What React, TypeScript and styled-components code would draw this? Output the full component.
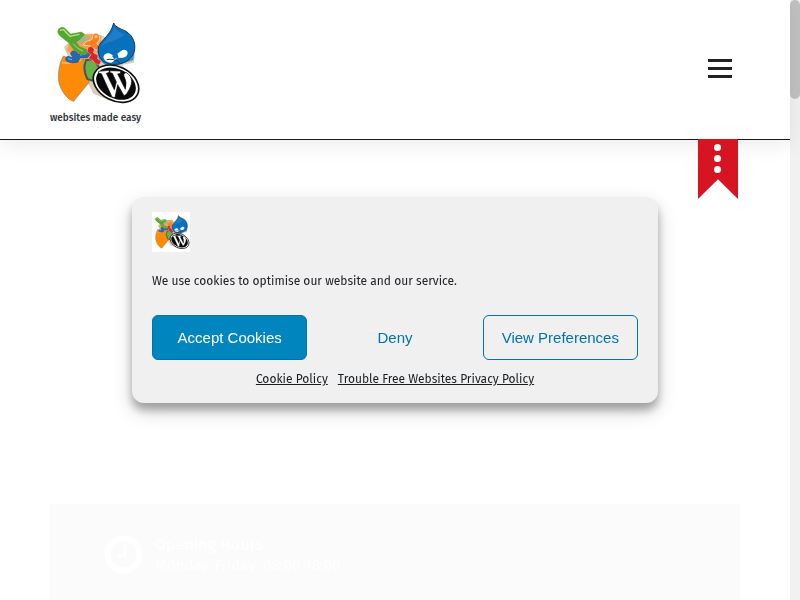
import React from "react";
import styled, { createGlobalStyle } from "styled-components";

const GlobalStyle = createGlobalStyle`
  *, *::before, *::after { box-sizing: border-box; }
  body {
    margin: 0;
    background: #fff;
    color: #222229;
    font-family: "Fira Sans", "Noto Sans", sans-serif;
    font-size: 12px;
  }
`;

const Viewport = styled.div`
  display: flex;
  height: 100vh;
  overflow: hidden;
`;

const Page = styled.div`
  flex: 1;
  min-width: 0;
`;

const ScrollTrack = styled.div`
  width: 10px;
  background: #f1f1f1;
`;

const ScrollThumb = styled.div`
  height: 99px;
  border-radius: 5px;
  background: #c1c1c1;
`;

const Header = styled.header`
  position: relative;
  display: flex;
  justify-content: space-between;
  align-items: center;
  height: 140px;
  padding: 2px 58px 0 50px;
  border-bottom: 1px solid #1a1a1a;
  box-shadow: 0 5px 20px rgba(0, 0, 0, 0.08);
`;

const Brand = styled.a`
  display: flex;
  flex-direction: column;
  align-items: flex-start;
  color: #2f3338;
  font-size: 10px;
  font-weight: 500;
  line-height: 16px;
  text-decoration: none;
`;

const LogoSvg = styled.svg<{ $small?: boolean }>`
  display: block;
  width: ${(p) => (p.$small ? 38 : 91)}px;
  height: ${(p) => (p.$small ? 40 : 95)}px;
  background: #fff;
`;

const MenuButton = styled.button`
  display: flex;
  flex-direction: column;
  gap: 5px;
  width: 24px;
  margin-bottom: 4px;
  padding: 0;
  border: 0;
  background: none;
`;

const MenuBar = styled.span`
  height: 3px;
  background: #222;
`;

const Ribbon = styled.button`
  position: absolute;
  top: 139px;
  right: 52px;
  display: flex;
  flex-direction: column;
  align-items: center;
  gap: 4px;
  width: 40px;
  height: 60px;
  padding: 5px 1px 0 0;
  border: 0;
  background: #d71422;
  clip-path: polygon(0 0, 100% 0, 100% 100%, 50% 67%, 0 100%);
`;

const Dot = styled.span`
  width: 7px;
  height: 7px;
  border-radius: 50%;
  background: #fff;
`;

const Hours = styled.section`
  display: flex;
  align-items: flex-start;
  gap: 12px;
  min-height: 130px;
  margin: 364px 50px 0;
  padding: 31px 54px;
  background: #fbfbfb;
  color: #fff;
`;

const ClockSvg = styled.svg`
  width: 39px;
  height: 39px;
`;

const HoursTitle = styled.h2`
  margin: 0;
  font-size: 16px;
  font-weight: 500;
  line-height: 20px;
`;

const HoursText = styled.p`
  margin: 0;
  font-size: 15px;
  line-height: 20px;
`;

const Overlay = styled.div`
  position: fixed;
  inset: 0 10px 0 0;
  display: flex;
  align-items: center;
  justify-content: center;
`;

const Dialog = styled.div`
  display: grid;
  width: 100%;
  max-width: 526px;
  padding: 15px 20px;
  border-radius: 12px;
  background: #f0f0f0;
  box-shadow: 0 7px 8px rgba(0, 0, 0, 0.28), 0 8px 20px rgba(0, 0, 0, 0.18);
`;

const Message = styled.p`
  margin: 20px 0 25px;
  line-height: 18px;
`;

const Buttons = styled.div`
  display: grid;
  grid-template-columns: repeat(3, 1fr);
  gap: 10px;
`;

const Button = styled.button<{ $kind: "accept" | "deny" | "view" }>`
  height: 45px;
  padding: 0;
  border: 1px solid ${(p) => (p.$kind === "deny" ? "transparent" : "#0073aa")};
  border-radius: 6px;
  background: ${(p) => (p.$kind === "accept" ? "#0085be" : "transparent")};
  color: ${(p) => (p.$kind === "accept" ? "#fff" : "#0073aa")};
  font-family: "Liberation Sans", Arial, sans-serif;
  font-size: 15px;
`;

const Links = styled.nav`
  display: flex;
  justify-content: center;
  gap: 10px;
  margin-top: 10px;

  a {
    color: #191e23;
    line-height: 18px;
  }
`;

function Logo({ small }: { small?: boolean }) {
  return (
    <LogoSvg $small={small} viewBox="30 15 273 285" role="img" aria-label="Trouble Free Websites">
      <path d="M101 82Q145 62 184 76L258 115L286 126L281 158L248 164L270 238L219 276L160 251L131 193L91 156L72 111Z" fill="#c9b89c" opacity=".7" />
      <path d="M88 100Q120 64 181 76L190 142L155 163L112 148L80 121Z" fill="#f3a34e" />
      <path d="M104 84Q130 70 150 82L138 98L114 100Z" fill="#a9b58d" />
      <path d="M170 110L284 112L280 150L206 174L176 148Z" fill="#3c91c6" />
      <path d="M70 138C55 165 51 205 60 228C69 251 86 271 101 274L148 216L134 190Q127 165 133 148L108 152Z" fill="#fd8b07" stroke="#8c8172" strokeWidth="2" />
      <path d="M66 158Q95 162 124 150" fill="none" stroke="#ffc173" strokeWidth="4" />
      <path d="M138 151L160 147L180 176L161 213L142 207Q127 176 138 151Z" fill="#6bb14b" stroke="#4c5645" strokeWidth="6" />
      <path d="M139 94Q151 94 158 86C152 66 178 65 179 82Q180 94 170 99L180 112L170 121L151 108L130 105Z" fill="#ff7d1b" stroke="#fff0dd" strokeWidth="2" />
      <circle cx="168" cy="80" r="5" fill="#ffc47e" />
      <path d="M92 132Q94 120 105 124L117 133L139 124L154 130L142 143L120 143L114 156Q96 162 80 154Q73 143 84 139L100 144Z" fill="#2369b2" stroke="#184f89" strokeWidth="2" />
      <path d="M85 146L95 149M121 135L136 132" stroke="#83b6e8" strokeWidth="3" strokeLinecap="round" />
      <path d="M58 55Q69 47 79 59L92 72L124 66L134 73L118 90L108 96L119 110L145 121L143 132L128 135L103 121L86 98L61 79Q47 65 58 55Z" fill="#54a62e" stroke="#3f8a33" strokeWidth="1" />
      <path d="M61 61Q71 55 77 66L90 79L117 73" fill="none" stroke="#b8e387" strokeWidth="4" strokeLinecap="round" />
      <path d="M99 101L112 114L129 123" fill="none" stroke="#a6db76" strokeWidth="3" />
      <path d="M144 112L155 109L163 118L160 128L174 136L173 147L184 153L178 165L166 161L158 151L145 145L153 134L142 125Z" fill="#df2128" stroke="#fff" strokeWidth="1" />
      <path d="M221 39C227 52 242 56 258 64C280 78 288 101 283 124C273 153 243 168 211 162C184 158 173 140 175 111C183 91 214 73 221 39Z" fill="#0871bd" stroke="#153957" strokeWidth="3" />
      <path d="M222 50C221 74 188 94 181 112C201 91 217 101 254 74C239 65 228 62 222 50Z" fill="#1f7dca" />
      <path d="M190 142Q193 128 208 130L223 138L247 120Q260 117 263 128Q263 140 249 143L232 144L215 158Q196 160 190 142Z" fill="#fff" />
      <path d="M216 137L232 131L236 143L222 147Z" fill="#0871bd" />
      <path d="M200 149Q220 144 240 158" fill="none" stroke="#173752" strokeWidth="3" />
      <ellipse cx="228" cy="221" rx="72" ry="51" transform="rotate(27 228 221)" fill="#fff" stroke="#111" strokeWidth="5" />
      <ellipse cx="228" cy="221" rx="63" ry="44" transform="rotate(27 228 221)" fill="#090909" />
      <path d="M176 184L207 181L208 187L199 190L223 239L229 216L217 190L210 188V182L241 183L242 190L233 192L256 238Q262 216 252 199Q249 189 259 188Q274 196 275 215Q275 228 260 252L252 257L233 224L225 263L216 261L184 191L176 190Z" fill="#fff" stroke="#090909" strokeWidth="2" />
    </LogoSvg>
  );
}

export default function App() {
  return (
    <>
      <GlobalStyle />
      <Viewport>
        <Page>
          <Header>
            <Brand href="#">
              <Logo />
              websites made easy
            </Brand>
            <MenuButton aria-label="Menu">
              <MenuBar />
              <MenuBar />
              <MenuBar />
            </MenuButton>
            <Ribbon aria-label="More">
              <Dot />
              <Dot />
              <Dot />
            </Ribbon>
          </Header>
          <Hours>
            <ClockSvg viewBox="0 0 39 39" fill="none" stroke="#fff" aria-hidden="true">
              <circle cx="19.5" cy="19.5" r="16" strokeWidth="6" />
              <path d="M21 10V21H13" strokeWidth="3" />
            </ClockSvg>
            <div>
              <HoursTitle>Opening Hours</HoursTitle>
              <HoursText>Monday-Friday: 08:00-18:00</HoursText>
            </div>
          </Hours>
        </Page>
        <ScrollTrack>
          <ScrollThumb />
        </ScrollTrack>
      </Viewport>
      <Overlay>
        <Dialog role="dialog" aria-label="Cookie consent">
          <Logo small />
          <Message>We use cookies to optimise our website and our service.</Message>
          <Buttons>
            <Button $kind="accept">Accept Cookies</Button>
            <Button $kind="deny">Deny</Button>
            <Button $kind="view">View Preferences</Button>
          </Buttons>
          <Links>
            <a href="#">Cookie Policy</a>
            <a href="#">Trouble Free Websites Privacy Policy</a>
          </Links>
        </Dialog>
      </Overlay>
    </>
  );
}
